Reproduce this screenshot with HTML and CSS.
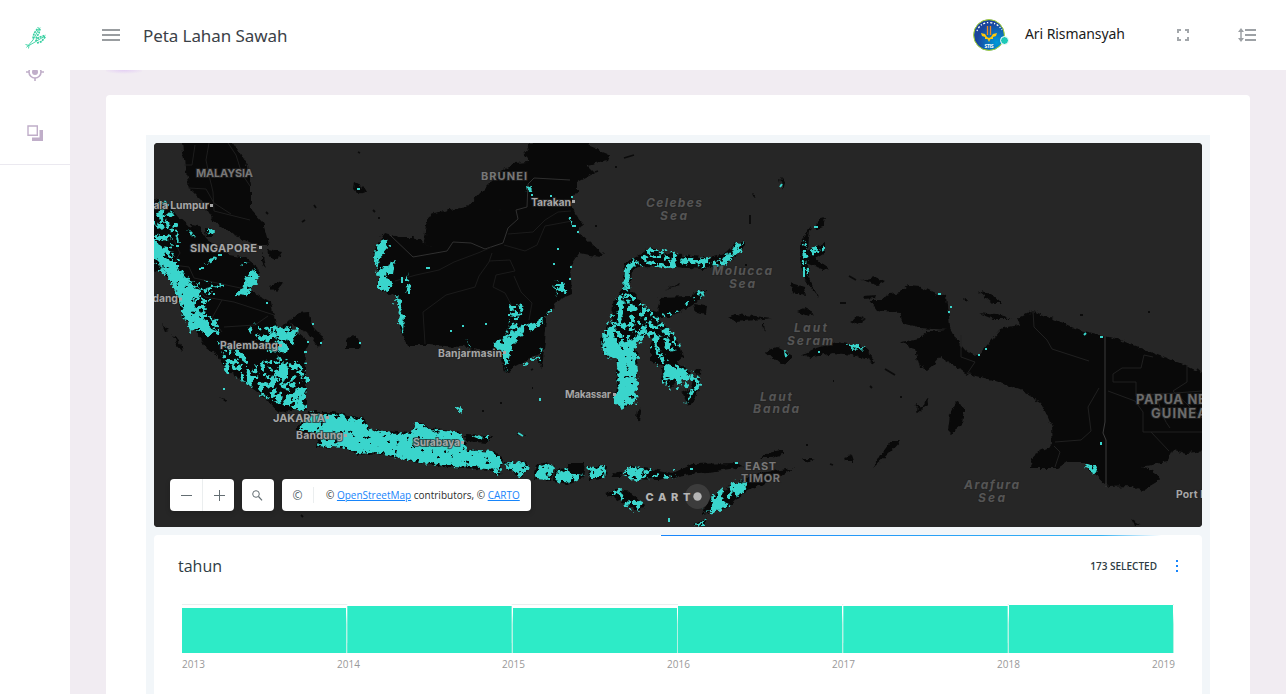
FILE: index.html
```html
<!DOCTYPE html>
<html lang="id">
<head>
<meta charset="utf-8">
<title>Peta Lahan Sawah</title>
<link rel="stylesheet" href="styles.css">
</head>
<body>
<div class="app">
  <header class="topbar">
    <a class="brand" aria-label="Beranda">
      <svg width="22" height="24" viewBox="0 0 22 24" fill="none" stroke="#36cfa0">
        <path d="M1.500 22.500 L8 15 L14.500 3 M.5 19.500 L4 20.500 L3.500 23.500 M4 20.500 L10 17 L20 11" stroke-width=".9"/>
        <path d="M8 13.500 L9 8.500 L13.500 2.500 M11 13.500 L14 8 L15.300 2.500" stroke-width="1.700" stroke-dasharray="2 .9"/>
        <path d="M10.500 16 L14 12.300 L20.500 10.300 M12 18 L16.500 16.500 L20.500 11.500" stroke-width="1.700" stroke-dasharray="2 .9"/>
      </svg>
    </a>
    <button class="menu" aria-label="Menu"><i></i><i></i><i></i></button>
    <h1 class="title">Peta Lahan Sawah</h1>
    <div class="user">
      <div class="avatar">
        <svg width="32" height="32" viewBox="0 0 32 32">
          <defs><radialGradient id="av" cx=".75" cy=".75" r=".65"><stop offset="0" stop-color="#0099d8"/><stop offset="1" stop-color="#1a449c"/></radialGradient></defs>
          <circle cx="16" cy="16" r="15.400" fill="url(#av)" stroke="#a9d52b" stroke-width="1"/>
          <path d="M4 12 Q7 4 16 3.500 Q25 4 29 11" fill="none" stroke="#fff" stroke-width="1.300" stroke-dasharray="1.200 1.800 2 1.800"/>
          <path d="M14.500 7 V16 M17.500 7 V16" stroke="#ef8a22" stroke-width="1.300"/>
          <path d="M8 14 L12 15 L14 18 L16 19 L18 18 L20 15 L24 14 L23 17 L20 18 L20 20 L17.500 20 L16 23 L14.500 20 L12 20 L12 18 L9 17Z" fill="#fcc70b"/>
          <text x="16" y="29" class="avatar-text" textLength="9">STIS</text>
        </svg>
        <span class="status"></span>
      </div>
      <span class="username">Ari Rismansyah</span>
    </div>
    <svg class="ic-full" width="12" height="12" viewBox="0 0 12 12" fill="none" stroke="#a3a7ab" stroke-width="2"><path d="M1 4V1H4M8 1H11V4M11 8V11H8M4 11H1V8"/></svg>
    <svg class="ic-lines" width="18" height="14" viewBox="0 0 18 14" fill="none" stroke="#9da1a5"><path d="M7 2H18M7 7H18M7 12H18" stroke-width="2"/><path d="M3 2V12" stroke-width="1.500"/><path d="M0 4L3 0L6 4ZM0 10L3 14L6 10Z" fill="#9da1a5" stroke="none"/></svg>
  </header>

  <div class="body">
    <nav class="sidebar">
      <svg width="18" height="18" viewBox="0 0 18 18" fill="none" stroke="#c0aec9"><circle cx="9" cy="9" r="6" stroke-width="1.600"/><circle cx="9" cy="9" r="3" fill="#c0aec9" stroke="none"/><path d="M9 0V3M9 15V18M0 9H3M15 9H18" stroke-width="1.600"/></svg>
      <svg width="16" height="16" viewBox="0 0 16 16"><path d="M1 1H10.300V10.300H1Z" fill="none" stroke="#c0aec9" stroke-width="1.400"/><path d="M12.500 5H16V16H5V12.500H12.500Z" fill="#c0aec9"/></svg>
    </nav>

    <main class="content">
      <div class="glow"></div>
      <section class="card">
        <div class="board">
          <div class="map">
            <svg class="map-art" width="1048" height="384" viewBox="154 143 1048 384">
              <defs>
                <filter id="rough" filterUnits="userSpaceOnUse" x="144" y="133" width="1068" height="404" color-interpolation-filters="sRGB">
                  <feTurbulence type="fractalNoise" baseFrequency=".16" numOctaves="3" seed="4" result="n"/>
                  <feDisplacementMap in="SourceGraphic" in2="n" scale="6" xChannelSelector="R" yChannelSelector="G"/>
                </filter>
                <filter id="dense" filterUnits="userSpaceOnUse" x="144" y="133" width="1068" height="404" color-interpolation-filters="sRGB">
                  <feTurbulence type="fractalNoise" baseFrequency=".2" numOctaves="3" seed="9" result="n"/>
                  <feDisplacementMap in="SourceGraphic" in2="n" scale="9" xChannelSelector="R" yChannelSelector="G" result="d"/>
                  <feColorMatrix in="n" type="matrix" values="0 0 0 0 0  0 0 0 0 0  0 0 0 0 0  0 0 18 0 -4.600" result="m"/>
                  <feComposite in="d" in2="m" operator="in"/>
                </filter>
                <filter id="sparse" filterUnits="userSpaceOnUse" x="144" y="133" width="1068" height="404" color-interpolation-filters="sRGB">
                  <feTurbulence type="fractalNoise" baseFrequency=".17" numOctaves="3" seed="21" result="n"/>
                  <feDisplacementMap in="SourceGraphic" in2="n" scale="10" xChannelSelector="R" yChannelSelector="G" result="d"/>
                  <feColorMatrix in="n" type="matrix" values="0 0 0 0 0  0 0 0 0 0  0 0 0 0 0  0 0 18 0 -9" result="m"/>
                  <feComposite in="d" in2="m" operator="in"/>
                </filter>
              </defs>
              <rect x="154" y="143" width="1048" height="384" fill="#262626"/>

              <!-- land -->
              <g fill="#090909" filter="url(#rough)">
                <path d="M181 135L185 167L189 188L201 200L213 220L233 235L256 245L269 245L263 223L251 210L251 185L248 167L238 150L228 135Z"/>
                <path d="M140 196L166 202L178 217L189 227L201 230L206 238L229 255L246 258L258 267L259 273L249 290L271 302L274 317L279 330L289 320L293 330L309 343L304 353L306 367L306 410L279 412L269 403L256 390L226 370L219 357L206 347L193 327L183 317L173 283L164 273L140 266Z"/>
                <path d="M289 322L299 313L308 312L313 327L323 337L319 347L309 333L293 325ZM346 340L353 335L360 340L358 348L346 348ZM205 229L212 230L212 237L206 237ZM190 225L199 226L203 232L196 236ZM162 324L169 330L165 331ZM172 334L182 346L183 352L176 344ZM220 398L227 399L226 402Z"/>
                <path d="M296 430L303 420L309 412L333 412L363 418L371 430L411 433L415 423L423 423L427 427L460 433L465 443L465 450L493 452L502 457L500 475L490 470L450 467L406 460L376 453L359 455L343 448L316 447L319 437Z"/>
                <path d="M463 435L492 436L487 443L467 441ZM502 463L523 461L530 468L520 477L511 471ZM534 479L537 465L547 462L554 467L552 481ZM554 481L555 470L567 468L568 463L585 463L583 478L567 484ZM588 467L607 465L606 478L589 479ZM612 472L621 473L622 477L614 477ZM623 473L633 466L657 470L673 473L692 464L737 463L744 467L715 471L690 474L657 480L633 479Z"/>
                <path d="M605 493L615 490L631 492L645 505L640 512L623 503ZM702 513L712 495L737 483L760 473L793 468L780 478L747 490L727 508ZM693 525L707 518L704 526ZM760 458L767 453L782 450L782 455L770 458ZM517 432L528 435L517 434ZM636 438L644 439ZM845 457L851 455L853 461L846 461ZM801 459L815 459L805 462Z"/>
                <path d="M385 233L398 237L413 237L432 247L423 242L428 215L433 213L467 207L483 190L503 170L515 163L528 162L523 155L537 135L587 135L590 147L610 155L608 160L587 165L595 173L577 182L577 192L570 203L575 213L583 225L578 232L603 255L600 257L580 253L570 267L572 293L563 297L547 313L547 320L545 340L542 368L537 360L541 353L505 372L500 350L477 350L463 347L427 345L407 345L400 330L400 317L397 297L380 290L378 273L374 253L380 240Z"/>
                <path d="M623 277L625 263L633 258L645 252L652 247L662 253L683 255L710 258L727 253L737 243L745 239L745 246L733 259L718 267L703 269L673 267L640 266L632 270L630 290L642 302L643 308L657 312L660 298L690 297L697 290L705 290L702 298L687 308L670 318L658 318L668 328L678 343L683 357L677 362L690 372L677 380L672 388L663 383L662 367L650 360L650 350L653 340L650 335L637 340L633 347L638 353L635 403L622 408L613 403L617 387L617 357L603 355L600 340L612 320L613 303L623 290Z"/>
                <path d="M697 368L701 371L699 376L695 373ZM693 380L700 378L700 385L695 400L688 405L682 393L690 389ZM638 408L641 410L640 423L637 421ZM665 289L681 283L680 285ZM694 304L707 306L706 314L696 312ZM752 191L756 199L753 196ZM780 178L785 183L783 190ZM776 262L777 267Z"/>
                <path d="M811 227L800 242L800 260L805 280L818 297L809 277L809 264L830 271L815 258L825 252L825 242L813 247L808 252L809 237ZM815 230L818 220L825 218L823 227ZM791 283L804 287L806 296L792 293ZM797 312L805 309L813 313L808 316ZM727 317L737 314L772 318L737 322ZM761 323L764 323L765 332ZM765 352L777 347L792 355L787 363L780 364Z"/>
                <path d="M803 354L814 349L837 342L867 347L875 363L853 355L833 353L810 358ZM850 320L858 316L865 320L858 324ZM862 280L875 277L885 281L877 285ZM864 296L876 295L875 298L863 299ZM850 255L860 253ZM820 263L828 268L822 270Z"/>
                <path d="M870 300L882 300L885 295L900 292L908 285L920 286L935 293L947 297L948 305L950 327L957 340L965 350L975 356L983 350L993 338L1002 328L1020 325L1017 319L1033 311L1050 318L1080 330L1105 336L1120 340L1153 353L1185 365L1215 380V450L1187 453L1173 450L1167 462L1140 467L1153 470L1160 480L1143 490L1130 486L1108 487L1093 473L1083 462L1067 462L1058 468H1029L1037 452L1053 445L1052 427L1047 415L1040 402L1020 390L993 380L967 374L957 367L940 357L933 365L927 370L920 367L915 350L901 341L920 338L927 332L947 330L920 328L903 323L900 313L877 310Z"/>
                <path d="M978 291L991 294L1001 303L992 303ZM979 313L996 315L1012 319L994 319ZM964 299L968 301L966 304ZM958 400L964 411L962 425L951 434L948 431L950 414ZM917 404L923 408L916 414ZM927 397L928 404L921 411ZM891 440L901 440L889 453L873 468L880 455ZM1130 508L1135 512ZM1131 519L1141 525L1134 526ZM355 182L361 185L365 192L359 194L354 189ZM267 249L283 252L278 260L269 256ZM270 286L283 282L276 292ZM262 252L266 270L262 261Z"/>
              </g>
              <path d="M358 152L360 153M266 212L268 214M302 222L305 220M314 205L316 208M373 210L375 212M378 218H380M426 235H428M499 210H501M595 226H597M531 370L533 369M500 403H502M482 411H484M532 388H533M301 515L303 517M595 172L598 171M624 158L634 155M616 166V168M870 386L872 388M833 381H834M1148 312H1150M885 369L895 375M900 397H902M806 445H808M830 464L833 465M745 265H747M750 215V224M849 276L856 280M840 303H846M1080 315H1083M1197 369L1200 372" stroke="#0b0b0b" stroke-width="1.800" fill="none"/>

              <!-- borders -->
              <g fill="none" stroke="#2a2a2a" stroke-width="1" stroke-linejoin="round">
                <path d="M390 235L413 257L447 251L453 242L471 243L485 249L503 243L508 228L518 219L516 210L527 207L528 184L534 178L570 180" stroke="#303030"/>
                <path d="M395 281L416 275L439 270L454 262L478 253L492 247M504 245L525 251L537 245L545 226L572 221M508 234L533 232L545 220L558 212L571 211M492 253L489 262L479 276L475 287L446 295L423 312L425 344M489 261L510 260L515 271L496 275L493 287L505 293L514 310L516 322M514 276L521 292L532 303L529 320" stroke="#1b1b1b"/>
                <path d="M209 143L206 160L209 175L213 192L214 211L250 220M189 188L206 189L214 203L231 214M228 143L236 155L242 174L250 186M195 145L192 165L184 165M174 240L180 253L173 265L189 267L194 278L231 286L250 290M190 281L205 297L234 302L274 315M222 300L212 318L222 332M224 327L255 325L268 316" stroke="#1e1e1e"/>
                <path d="M1105 336V422L1103 433L1106 440V487" stroke="#3c3c3c"/>
                <path d="M1033 311L1034 327L1047 340L1052 349L1089 361M1099 388L1088 407L1091 431L1081 440L1055 442M961 335V357L975 362L967 374M1108 391L1135 401L1143 412V432H1202M1151 432L1169 451M1113 374L1122 368H1141L1144 355L1153 357M1113 374V382L1136 382V396L1202 391M1187 365V382L1173 391L1202 418M1158 400Q1162 418 1170 428M1054 446L1060 452L1055 467" stroke="#202020"/>
              </g>

              <!-- rice fields -->
              <g fill="#3ad5cc" filter="url(#dense)">
                <path d="M154 236L166 256L176 268L187 280L197 290L199 298L192 300L199 312L210 326L208 335L199 326L191 332L184 318L177 294L168 278L160 264L154 258Z"/>
                <path d="M252 269L258 271L257 283L249 292L247 296L235 295L243 288L245 278ZM208 228L214 231L212 235L208 233ZM189 230L194 235L193 238ZM271 327L281 326L298 332L290 341L280 340L270 334ZM279 345L287 348L284 354L279 351ZM281 363L287 364L286 375L270 379L277 370Z"/>
                <path d="M302 388L304 411L298 410L298 398L291 405L282 405L290 393Z"/>
                <path d="M298 430L304 420L312 413L333 415L334 412L348 418L363 419L371 431L411 434L415 424L423 424L430 429L462 434L465 450L493 452L501 458L499 474L488 468L452 466L406 460L376 452L360 454L343 448L318 446L322 437L314 432Z"/>
                <path d="M504 464L523 462L529 468L519 477ZM535 479L538 466L549 464L554 469L550 480ZM555 481L559 471L567 469L575 474L584 475L568 483ZM588 467L606 466L604 478L591 478Z"/>
                <path d="M380 242L387 239L389 247L378 259L376 272L394 262L392 274L385 274L392 283L388 291L379 289V276L374 262L375 250ZM397 296L402 302L401 309L404 316L403 332L398 321L400 311L394 302Z"/>
                <path d="M492 344L511 333L527 322L522 335L514 342L509 358L506 369L500 350ZM465 339L469 345L470 350ZM475 346L480 346Z"/>
                <path d="M616 357L624 345L630 345L638 356L636 362L638 385L635 403L622 408L613 402L619 386ZM667 364L677 367L690 374L683 380L672 378L664 382L663 373Z"/>
                <path d="M603 332L615 321L613 333L618 344L640 335L648 333L634 348L622 352L618 358L604 354ZM624 291L625 266L634 259L637 263L630 270L629 290ZM736 244L743 243L741 250L725 265L719 268L721 260L731 253ZM697 291L704 290L703 299ZM848 344L856 345L866 348L852 350ZM784 350L789 354L785 359ZM1085 463L1096 467L1095 473L1087 469ZM1099 464L1102 462ZM735 485L745 481L746 491L738 495L730 490ZM703 513L713 509L711 495L718 500L730 505L715 512ZM694 526L707 518L704 525ZM623 472L633 466L645 470L641 476L631 478Z"/>
                <path d="M527 186L532 188L531 192L528 192ZM457 406L463 409L460 412Z"/>
              </g>
              <g fill="#3ad5cc" filter="url(#sparse)">
                <path d="M154 197L166 203L177 219L180 243L169 236L173 254L192 282L214 288L212 296L206 302L211 316L220 323L218 334L207 338L195 329L176 286L154 268Z"/>
                <path d="M217 340L242 350L253 367L279 357L306 364L306 408L290 408L271 396L255 387L226 369ZM249 262L238 258L240 264ZM212 253L205 265L221 262ZM190 281L224 285L216 294L194 294ZM246 325L302 330L290 351L271 354Z"/>
                <path d="M226 362L240 372L256 382L268 392L282 404L298 400L304 380L306 404L290 408L271 400L255 389L226 371Z"/>
                <path d="M623 287L640 301L656 314L673 333L682 348L655 354L649 336L630 340L617 359L602 354L607 325L616 301ZM645 250L661 249L690 257L718 259L736 249L736 255L717 269L692 264L663 269L636 265ZM659 317L669 318L700 297L704 291L684 305ZM655 350L673 362L690 371L691 379L672 390L663 385Z"/>
                <path d="M509 303L522 305L526 312L512 320L522 328L540 316L545 325L523 334L515 347L499 347L511 323ZM519 364L533 358L543 345L541 359L521 368ZM555 278L569 285L566 297L556 295L553 288ZM544 316L552 309L552 314ZM568 218L574 221L574 224ZM408 273L411 290L405 292Z"/>
                <path d="M609 491L620 490L645 505L639 513L621 503ZM623 473L633 465L658 472L677 471L675 478L647 477L634 481ZM469 435L492 436L487 442ZM736 481L748 483L738 495L712 512L711 492Z"/>
                <path d="M801 243L808 240L807 276L802 266ZM812 246L825 245L821 255L810 254ZM695 369L702 384L686 402L682 388Z"/>
              </g>
              <path d="M312 324h2M320 343h2M359 343h2M304 352h3M223 389h2M357 189h3M426 268h4M401 278h2M402 279v4M409 290v4M463 325v2M450 331h2M485 324h2M509 307h7M508 315h2M514 319h4M531 195h2M550 196h2M571 197h2M569 218h2M572 226h4M577 232h2M557 249h2M571 266v2M569 279h2M556 285h8M559 290h6M562 282v10M553 264h2M938 294h3M950 307h2M948 312h2M978 355h2M985 349h2M1084 335l2 -2M1100 337h3M1101 442v3M782 184l-2 3M814 227h4M803 251h3M813 252h3M804 267v10M818 352h2M540 398v3M518 433l5 3M735 463h3M690 469h3M669 518v4M164 260h4M175 266h4M201 268h3M218 255h4M176 246h3M266 303h2M200 268v2M307 342h2" stroke="#3ad5cc" stroke-width="2" fill="none"/>

              <!-- labels -->
              <g class="country">
                <text x="196" y="177" textLength="57">MALAYSIA</text>
                <text x="481" y="180" textLength="46">BRUNEI</text>
                <text x="745" y="470" textLength="31">EAST</text>
                <text x="741" y="481.500" textLength="39">TIMOR</text>
                <g class="large"><text x="1136" y="404" textLength="84">PAPUA NEW</text><text x="1151" y="418" textLength="56">GUINEA</text></g>
              </g>
              <g class="sea">
                <text x="646" y="207" textLength="56">Celebes</text><text x="660" y="220" textLength="27">Sea</text>
                <text x="712" y="275" textLength="60">Molucca</text><text x="729" y="288" textLength="26">Sea</text>
                <text x="794" y="332" textLength="33">Laut</text><text x="787" y="345" textLength="46">Seram</text>
                <text x="760" y="400.500" textLength="32">Laut</text><text x="753" y="413" textLength="46">Banda</text>
                <text x="964" y="489" textLength="55">Arafura</text><text x="978" y="502" textLength="27">Sea</text>
              </g>
              <g class="city">
                <text x="140" y="209" textLength="69">Kuala Lumpur</text>
                <text x="140" y="302" textLength="38">Padang</text>
                <text x="220" y="349" textLength="58">Palembang</text>
                <text x="296" y="439" textLength="47">Bandung</text>
                <text x="413" y="446" textLength="47">Surabaya</text>
                <text x="438" y="357" textLength="64">Banjarmasin</text>
                <text x="565" y="398" textLength="46">Makassar</text>
                <text x="531" y="205.500" textLength="40">Tarakan</text>
                <text x="1176" y="497.500" textLength="70">Port Moresby</text>
                <g class="capital"><text x="190" y="252" textLength="67">SINGAPORE</text><text x="273" y="422" textLength="52">JAKARTA</text></g>
              </g>
              <path d="M210 205.500h3M259 247.500h3M179 299h3M279 345.500h3M326 417.500h3M344 435.500h3M461 442.500h3M503 352.500h3M613 394.500h3M572 201.500h3" stroke="#a7a7a7" stroke-width="3"/>
              <circle cx="697.500" cy="496.500" r="12.500" fill="#aaa" fill-opacity=".17"/>
              <circle cx="697.500" cy="496.500" r="4.200" fill="#b5b5b5"/>
              <text class="carto" x="645.500" y="500.500" textLength="45">CART</text>
            </svg>
            <div class="controls">
              <div class="ctl zoom">
                <button aria-label="Zoom out"><svg width="11" height="11"><path d="M0 5.500H11" stroke="#636d72"/></svg></button>
                <button aria-label="Zoom in"><svg width="11" height="11"><path d="M0 5.500H11M5.500 0V11" stroke="#636d72"/></svg></button>
              </div>
              <button class="ctl search" aria-label="Search"><svg width="11" height="11" viewBox="0 0 11 11" fill="none" stroke="#636d72"><circle cx="4" cy="4" r="3.300"/><path d="M6.500 6.500L10 10.300" stroke-width="1.200"/></svg></button>
              <div class="ctl credits"><span class="copy">©</span><span class="credit-text">© <a href="#">OpenStreetMap</a> contributors, © <a href="#">CARTO</a></span></div>
            </div>
          </div>

          <div class="widget">
            <div class="progress"></div>
            <div class="widget-head">
              <h2>tahun</h2>
              <span class="selected">173 SELECTED</span>
              <span class="dots"><i></i><i></i><i></i></span>
            </div>
            <div class="bars">
              <i style="height:45px"></i><i style="height:47px"></i><i style="height:45px"></i><i style="height:47px"></i><i style="height:47px"></i><i style="height:48px"></i>
            </div>
            <div class="years"><span>2013</span><span>2014</span><span>2015</span><span>2016</span><span>2017</span><span>2018</span><span>2019</span></div>
          </div>
        </div>
      </section>
    </main>
  </div>
</div>
</body>
</html>
```

FILE: styles.css
```css
* { box-sizing: border-box; }
body { margin: 0; background: #f1ecf2; font-family: "Open Sans", sans-serif; }
button { border: 0; padding: 0; background: none; }
.app { height: 694px; display: flex; flex-direction: column; overflow: hidden; }

.topbar { height: 70px; flex: none; display: flex; align-items: center; background: #fff; }
.brand { width: 70px; padding: 3px 0 0 1px; display: flex; justify-content: center; }
.menu { width: 18px; margin-left: 32px; display: flex; flex-direction: column; gap: 3px; }
.menu i { height: 2px; background: #999da0; }
.title { margin: 0 0 0 23px; width: 600px; font: 400 17px/24px "Noto Sans", sans-serif; letter-spacing: -.08px; color: #3b4147; padding-top: 1px; }
.user { display: flex; align-items: center; margin-left: 230px; }
.avatar { position: relative; width: 32px; height: 32px; }
.avatar svg { display: block; }
.avatar-text { font: bold 5px "Open Sans", sans-serif; fill: #fff; text-anchor: middle; }
.status { position: absolute; left: 27px; top: 17px; width: 9px; height: 9px; border-radius: 50%; background: #1dc9b7; border: 1.500px solid #fff; }
.username { margin: -3px 0 0 20px; width: 101px; white-space: nowrap; font: 400 14px/20px "Noto Sans", sans-serif; letter-spacing: -.08px; color: #1a1a1a; }
.ic-full { margin-left: 51px; }
.ic-lines { margin-left: 49px; }

.body { flex: 1; min-height: 0; display: flex; }
.sidebar { width: 70px; background: #fff; display: flex; flex-direction: column; align-items: center; overflow: hidden; }
.sidebar svg { flex: none; }
.sidebar svg:first-child { margin-top: -7px; }
.sidebar svg:last-child { margin-top: 44px; }
.sidebar::after { content: ""; width: 70px; height: 1px; flex: none; margin-top: 23px; background: #ebe9f0; }
.content { flex: 1; overflow: hidden; padding: 0 36px; }
.glow { width: 36px; height: 25px; background: radial-gradient(ellipse 22px 4px at 18px 0, #e4cff4, transparent); }
.card { height: 700px; background: #fff; border-radius: 4px; padding: 40px; }
.board { height: 660px; padding: 8px; background: #f2f6f9; display: flex; flex-direction: column; gap: 8px; }

.map { height: 384px; flex: none; display: grid; border-radius: 4px; overflow: hidden; background: #262626; }
.map > * { grid-area: 1 / 1; }
.map-art { display: block; }
.map-art text { font-family: Inter, sans-serif; paint-order: stroke; stroke: #222; stroke-width: 2px; stroke-opacity: .7; }
.country text { font-size: 11px; font-weight: 700; fill: #777; }
.country .large text { font-size: 13px; fill: #6b6b6b; }
.sea text { font-size: 12px; font-weight: 700; font-style: italic; fill: #555; }
.city text { font-size: 10.5px; font-weight: 700; fill: #a6a6a6; }
.city .capital text { font-size: 11px; }
.map-art .carto { font-size: 11px; font-weight: 800; fill: #b5b5b5; stroke: none; }

.controls { align-self: end; display: flex; gap: 8px; padding: 0 16px 16px; }
.ctl { height: 32px; background: #fff; border-radius: 4px; display: flex; align-items: center; justify-content: center; box-shadow: 0 2px 5px rgba(0, 0, 0, .18); }
.zoom { width: 64px; }
.zoom button { width: 32px; height: 32px; display: flex; align-items: center; justify-content: center; }
.zoom button + button { border-left: 1px solid #ebeeef; padding-left: 1px; }
.search { width: 32px; padding-right: 2px; }
.credits { width: 249px; justify-content: flex-start; font-size: 10px; color: #2c2c2c; }
.copy { width: 32px; height: 16px; line-height: 17px; text-align: center; border-right: 1px solid #ebeeef; color: #50636b; font-size: 12px; }
.credit-text { padding: 0 0 0 12px; white-space: nowrap; }
.credit-text a { color: #1785fb; }

.widget { height: 400px; flex: none; background: #fff; border-radius: 4px; }
.progress { width: 500px; height: 1px; margin-left: 507px; background: linear-gradient(90deg, #1785fb, #36b2f3 88%, #fff); }
.widget-head { height: 68px; padding: 0 20px 8px 24px; display: flex; align-items: center; }
.widget-head h2 { flex: 1; margin: 0; font-size: 16px; font-weight: 400; line-height: 22px; color: #2e3c43; }
.selected { font-size: 10px; font-weight: 600; color: #2e3c43; }
.dots { width: 10px; margin-left: 15px; display: flex; flex-direction: column; align-items: center; gap: 3px; }
.dots i { width: 2px; height: 2px; background: #1785fb; }
.bars { height: 49px; margin: 0 28px 0 28px; border-top: 1px solid #eaeeee; display: grid; grid-template-columns: repeat(6, 1fr); column-gap: 1px; align-items: end; padding: 0 1px 0 0; background: linear-gradient(#fff 15%, #b4f2e4 40%); }
.bars i { background: #2debc7; box-shadow: 0 -10px 0 #fff; clip-path: inset(-3px 0 0 0); }
.years { padding: 4px 24px 0 28px; display: grid; grid-template-columns: 155px 165px 165px 165px 165px 155px auto; font-size: 10px; line-height: 14px; color: #999; }
```
